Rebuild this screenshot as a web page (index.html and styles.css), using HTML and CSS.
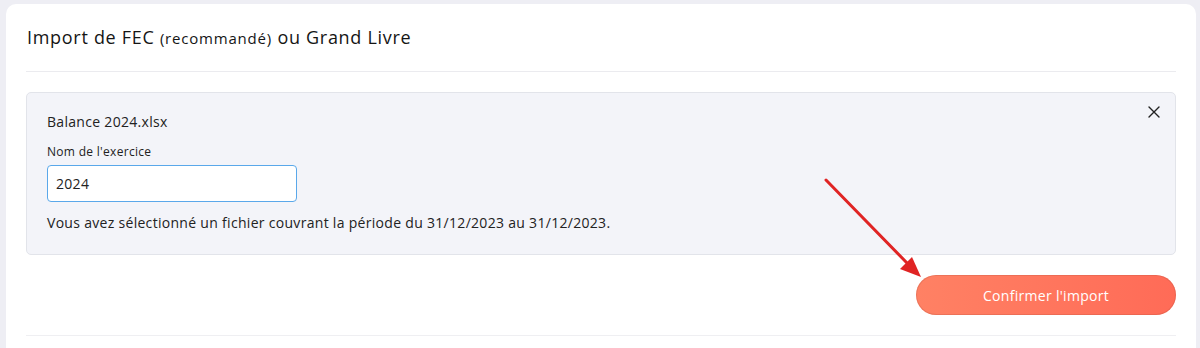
FILE: index.html
```html
<!DOCTYPE html>
<html lang="fr">
<head>
<meta charset="utf-8">
<title>Import de FEC</title>
<link rel="stylesheet" href="styles.css">
</head>
<body>
<div class="page">
  <section class="card">
    <h2 class="card-title">Import de FEC <span class="title-small">(recommandé)</span> ou Grand Livre</h2>
    <div class="divider"></div>
    <div class="file-box">
      <div class="file-name">Balance 2024.xlsx</div>
      <label class="field-label" for="ex">Nom de l'exercice</label>
      <input class="field-input" id="ex" type="text" value="2024">
      <p class="period">Vous avez sélectionné un fichier couvrant la période du 31/12/2023 au 31/12/2023.</p>
      <button class="close-btn" aria-label="Fermer">
        <svg width="12" height="12" viewBox="0 0 12 12"><path d="M1 1L11 11M11 1L1 11" stroke="#222" stroke-width="1.4" stroke-linecap="round"/></svg>
      </button>
    </div>
    <div class="actions">
      <button class="confirm-btn">Confirmer l'import</button>
    </div>
    <div class="divider bottom"></div>
    <svg class="annot-arrow" width="120" height="120" viewBox="0 0 120 120">
      <line x1="6" y1="6" x2="88" y2="90" stroke="#e02424" stroke-width="3" stroke-linecap="round"/>
      <polygon points="101,103 80,95 92,83" fill="#e02424"/>
    </svg>
  </section>
</div>
</body>
</html>
```
FILE: styles.css
```css
* { box-sizing: border-box; }
html, body { margin: 0; padding: 0; }
body {
  background: #eeeef4;
  font-family: "Open Sans", "Liberation Sans", sans-serif;
  color: #1f1f1f;
  width: 1200px;
  height: 348px;
  overflow: hidden;
}
.page { padding: 4px 4px 0 6px; }
.card {
  position: relative;
  background: #fff;
  border-radius: 10px;
  padding: 0 20px 20px 20px;
  min-height: 400px;
}
.card-title {
  margin: 0;
  padding: 22px 0 21px 1px;
  font-size: 18px;
  font-weight: 500;
  line-height: 23px;
  color: #151515;
  letter-spacing: 0.7px;
}
.title-small { font-size: 15px; letter-spacing: 0.8px; }
.divider { height: 1px; background: #ebebef; }
.file-box {
  position: relative;
  margin-top: 20px;
  background: #f3f4f9;
  border: 1px solid #e2e4ea;
  border-radius: 5px;
  padding: 19px 20px 21px 20px;
  display: flex;
  flex-direction: column;
  align-items: flex-start;
}
.file-name { font-size: 14px; line-height: 20px; color: #222; letter-spacing: 0.3px; }
.field-label { margin-top: 12px; font-size: 12px; line-height: 16px; color: #222; letter-spacing: 0.3px; }
.field-input {
  margin-top: 5px;
  width: 250px;
  height: 37px;
  border: 1px solid #5aa8ea;
  border-radius: 4px;
  padding: 0 8px;
  font: inherit;
  font-size: 14px;
  letter-spacing: 0.3px;
  color: #222;
  background: #fff;
  outline: none;
}
.period { margin: 11px 0 0 0; font-size: 14px; line-height: 20px; color: #222; letter-spacing: 0.3px; }
.close-btn {
  position: absolute;
  top: 13px;
  right: 15px;
  border: 0;
  background: transparent;
  padding: 0;
  width: 12px;
  height: 12px;
  cursor: pointer;
}
.close-btn svg { display: block; }
.actions {
  display: flex;
  justify-content: flex-end;
  padding: 20px 0 20px 0;
}
.confirm-btn {
  width: 260px;
  height: 40px;
  border: 0;
  border-radius: 20px;
  background: linear-gradient(90deg, #ff8164 0%, #ff6b57 100%);
  color: #fff;
  font: inherit;
  font-size: 14px;
  font-weight: 500;
  letter-spacing: 0.3px;
  box-shadow: 0 0 0 1px rgba(180,80,60,0.25) inset;
}
.divider.bottom { background: #efeff2; }
.annot-arrow {
  position: absolute;
  left: 814px;
  top: 170px;
  pointer-events: none;
}
```
